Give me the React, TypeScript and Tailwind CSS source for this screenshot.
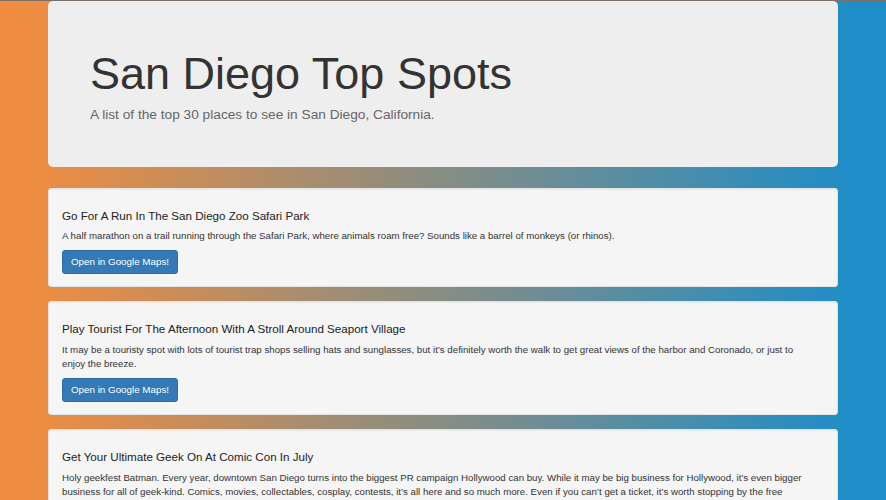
const SPOTS = [
  {
    title: "Go For A Run In The San Diego Zoo Safari Park",
    text: "A half marathon on a trail running through the Safari Park, where animals roam free? Sounds like a barrel of monkeys (or rhinos).",
  },
  {
    title: "Play Tourist For The Afternoon With A Stroll Around Seaport Village",
    text: "It may be a touristy spot with lots of tourist trap shops selling hats and sunglasses, but it\u2019s definitely worth the walk to get great views of the harbor and Coronado, or just to enjoy the breeze.",
  },
  {
    title: "Get Your Ultimate Geek On At Comic Con In July",
    text: "Holy geekfest Batman. Every year, downtown San Diego turns into the biggest PR campaign Hollywood can buy. While it may be big business for Hollywood, it\u2019s even bigger business for all of geek-kind. Comics, movies, collectables, cosplay, contests, it\u2019s all here and so much more. Even if you can\u2019t get a ticket, it\u2019s worth stopping by the free events outside the convention center and gawking at the hordes of costumed fans roaming the streets.",
  },
];

function SpotCard({ title, text }: { title: string; text: string }) {
  return (
    <div className="mb-[14px] rounded-[3px] border border-[#e3e3e3] bg-[#f5f5f5] pl-[13px] pr-[27px] pt-[13px] pb-[12px] shadow-[inset_0_1px_1px_rgba(0,0,0,0.05)]">
      <h4 className="mt-[7px] mb-[7px] text-[11.6px] leading-[1.2] text-[#222]">{title}</h4>
      <p className="mb-[7px] text-[9.7px] leading-[14px] text-[#333]">{text}</p>
      <button className="block rounded-[3px] border border-[#2e6da4] bg-[#337ab7] px-[8px] py-[5px] text-[9.8px] leading-[12px] text-white">
        Open in Google Maps!
      </button>
    </div>
  );
}

export default function App() {
  return (
    <div
      className="min-h-[500px] overflow-hidden border-t border-[#7b7068] bg-[linear-gradient(to_right,#f08d40_3%,#1f8dc7_96%)]"
      style={{ fontFamily: '"Liberation Sans", Arial, sans-serif' }}
    >
      <div className="mx-[48px] w-[790px]">
        <div className="mb-[21px] rounded-[5px] bg-[#eeeeee] px-[42px] pt-[34px] pb-[32px]">
          <h1 className="mt-[14px] mb-[5px] text-[45px] leading-[1.1] text-[#333]">San Diego Top Spots</h1>
          <p className="mb-[10px] text-[13.7px] leading-[21px] font-light text-[#666]">
            A list of the top 30 places to see in San Diego, California.
          </p>
        </div>
        {SPOTS.map((s) => (
          <SpotCard key={s.title} title={s.title} text={s.text} />
        ))}
      </div>
    </div>
  );
}
